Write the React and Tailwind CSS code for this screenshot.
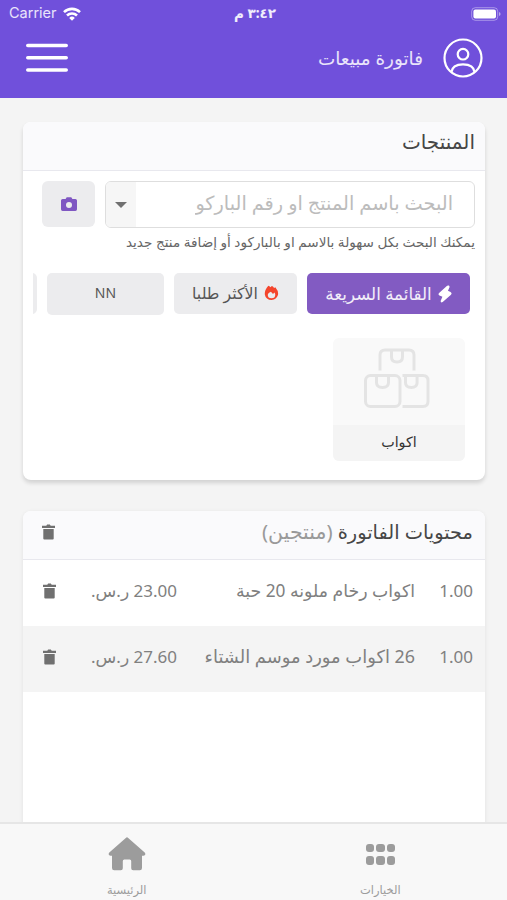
import React from 'react';

const items = [
  { qty: '1.00', name: 'اكواب رخام ملونه 20 حبة', price: '23.00 ر.س.', size: 'text-[17.3px]' },
  { qty: '1.00', name: '26 اكواب مورد موسم الشتاء', price: '27.60 ر.س.', size: 'text-[17.9px]' },
];

const WifiIcon = () => (
  <svg viewBox="0 0 18 14" className="w-[18px] h-[14px]" fill="none" stroke="#fff" strokeWidth="2.6">
    <path d="M1 5.1a11.6 11.6 0 0 1 16 0" />
    <path d="M4 8.5a7.2 7.2 0 0 1 10 0" />
    <path d="M6.2 10.9a4 4 0 0 1 5.6 0L9 13.8z" fill="#fff" stroke="none" />
  </svg>
);

const BatteryIcon = () => (
  <svg viewBox="0 0 30 14" className="w-[30px] h-[14px]">
    <rect x="0.7" y="0.7" width="26" height="12.6" rx="3.6" fill="none" stroke="#fff" strokeOpacity="0.4" strokeWidth="1" />
    <rect x="2.4" y="2.4" width="22.6" height="9.2" rx="2" fill="#fff" />
    <path d="M28 5v4q1.6-.6 1.6-2T28 5z" fill="#fff" fillOpacity="0.5" />
  </svg>
);

const UserIcon = () => (
  <svg viewBox="0 0 40 40" className="w-10 h-10" fill="none" stroke="#fff" strokeWidth="2.2">
    <circle cx="20" cy="20" r="18.5" />
    <circle cx="20" cy="16.2" r="5.3" />
    <path d="M8.4 34.2C9 29 13 26.3 20 26.3s11 2.7 11.6 7.9" />
  </svg>
);

const CameraIcon = () => (
  <svg viewBox="0 0 16 14" className="w-4 h-[14px]">
    <path
      d="M1.6 1.9h3L5.7.3h4.6l1.1 1.6h3q1.6 0 1.6 1.6v8.8q0 1.6-1.6 1.6H1.6Q0 13.9 0 12.3V3.5q0-1.6 1.6-1.6zM8 4.9a3 3 0 1 0 0 6 3 3 0 0 0 0-6z"
      fill="#7f57c2"
      fillRule="evenodd"
    />
  </svg>
);

const BoltIcon = () => (
  <svg viewBox="0 0 14 18" className="w-[14px] h-[18px]">
    <path
      d="M9.6 1.4 1.6 8.6q-.7.8.2 1.300l3.600 1.500-2 4.700q-.1 1 .8.400l8.300-7.400q.7-.8-.2-1.300L9 6.300l1.800-4.400q0-1-1.200-.5z"
      fill="#fff"
      stroke="#fff"
      strokeWidth="1.5"
      strokeLinejoin="round"
    />
  </svg>
);

const FireIcon = () => (
  <svg viewBox="0 0 16 18" className="w-[15px] h-[17px]">
    <path
      d="M4.600.8Q6 1.200 6.800 2.300 7.700 1 8.500.9q1.500.7 2.200 2.200l1.400-.9q3 3.300 3 7.400a7.200 7.200 0 0 1-14.300.2Q.8 4.800 4.600.8zM4 10.300a4 3.800 0 0 0 8 0q0-1.400-.9-2.300L9.600 9.600 7.400 7.100Q4.200 8 4 10.300z"
      fill="#f4452c"
      fillRule="evenodd"
    />
  </svg>
);

const BoxesIcon = () => (
  <svg viewBox="0 0 66 60" className="w-[66px] h-[60px]" fill="none" stroke="#e4e4e4" strokeWidth="3">
    <path d="M16 22.5V7q0-5 5-5h24q5 0 5 5v15.5" />
    <path d="M27.500 2v7q0 5 5.500 5t5.500-5V2" />
    <rect x="1.5" y="27.5" width="34.5" height="31" rx="5" />
    <path d="M12.500 27.500v7q0 5 6 5t6-5v-7" />
    <path d="M38.500 27.500h20.500q5 0 5 5v21q0 5-5 5H38.500" />
    <path d="M41.500 27.500v7q0 5 5.800 5t5.800-5v-7" />
  </svg>
);

const TrashIcon = () => (
  <svg viewBox="0 0 13 16" className="w-[13px] h-4 shrink-0" fill="#707070">
    <path d="M0 1.700h4.300L5.100.5h2.800l.8 1.200H13V4H0z" />
    <path d="M1.300 5h10.400v9.400q0 1-1 1H2.300q-1 0-1-1z" />
  </svg>
);

const HomeIcon = () => (
  <svg viewBox="0 0 38 34" className="w-[38px] h-[34px]">
    <path
      d="M17.800.9q1.200-1.100 2.400 0L36.700 15.500q1 1.200.4 2.300-.5 1-1.800 1H34V31q0 2.200-2.200 2.200h-6.600q-2 0-2-2V24q0-1.500-1.500-1.500h-5.400q-1.500 0-1.500 1.500v7.200q0 2-2 2H6.200Q4 33.200 4 31V18.800H2.700q-1.300 0-1.800-1-.6-1.100.4-2.300z"
      fill="#9c9c9c"
    />
  </svg>
);

const GridIcon = () => (
  <div className="grid grid-cols-3 gap-x-[2px] gap-y-[4px]">
    {[0, 1, 2, 3, 4, 5].map((i) => (
      <div key={i} className="w-[8.5px] h-[8.5px] rounded-[3px] bg-[#9c9c9c]" />
    ))}
  </div>
);

const MenuIcon = () => (
  <svg viewBox="0 0 42 30" className="w-[42px] h-[30px]" stroke="#fff" strokeWidth="3.6" strokeLinecap="round">
    <path d="M1.8 2.500h38.400M1.800 14.800h38.400M1.800 27h38.400" />
  </svg>
);

const App = () => {
  return (
    <div
      dir="rtl"
      className="w-full h-[900px] flex flex-col overflow-hidden bg-[#f4f4f4] font-['Noto_Sans','DejaVu_Sans',sans-serif] whitespace-nowrap"
    >
      {/* Header */}
      <header className="h-[98px] shrink-0 bg-[#7050db] text-white">
        <div dir="ltr" className="h-[27px] grid grid-cols-3 items-center pl-[9px] pr-[6px]">
          <div className="flex items-center gap-[6px]">
            <span className="text-[14.5px] leading-none font-['Inter',sans-serif] text-white/85">Carrier</span>
            <WifiIcon />
          </div>
          <div dir="rtl" className="text-center text-[13.5px] leading-none font-bold text-white/90">٣:٤٢ م</div>
          <div className="flex justify-end">
            <BatteryIcon />
          </div>
        </div>
        <div className="h-[62px] flex items-center justify-between pr-6 pl-[26px]">
          <div className="flex items-center gap-5">
            <UserIcon />
            <h1 className="text-[18.4px] leading-none text-white/85">فاتورة مبيعات</h1>
          </div>
          <MenuIcon />
        </div>
      </header>

      <main className="flex-1 min-h-0 overflow-hidden pt-6 pr-[22px] pl-[23px]">
        {/* Products */}
        <section className="h-[358px] rounded-lg bg-white shadow-[0_3px_4px_rgba(0,0,0,0.14)] overflow-hidden">
          <div className="h-[49px] pt-[10px] pr-[10px] bg-[#fafafc] border-b border-[#e8e8ee]">
            <h2 className="text-[20px] leading-5 font-medium text-[#464646]">المنتجات</h2>
          </div>
          <div className="flex gap-[10px] pt-[10px] pr-[10px]">
            <div className="w-[370px] h-[47px] flex rounded-md border-[1.5px] border-[#dedede] overflow-hidden">
              <div className="flex-1 min-w-0 flex items-center pr-[21px] pb-1">
                <div className="w-[258px] overflow-hidden text-[19.3px] leading-9 text-[#bcbcbc]">البحث باسم المنتج او رقم الباركود</div>
              </div>
              <div className="w-[30px] bg-[#f6f6f6] flex items-center justify-center">
                <div className="border-x-[6.5px] border-t-[6.5px] border-x-transparent border-t-[#707070]" />
              </div>
            </div>
            <button className="w-[53px] h-[46px] rounded-md bg-[#ececee] flex items-center justify-center">
              <CameraIcon />
            </button>
          </div>
          <p className="pt-1 pr-[10px] text-[13.6px] leading-5 text-[#666]">يمكنك البحث بكل سهولة بالاسم او بالباركود أو إضافة منتج جديد</p>

          <div className="flex gap-[10px] mt-[21px] mr-[15px] w-[437px] overflow-hidden text-[15.8px] text-[#555]">
            <button className="w-[163px] h-[41px] shrink-0 rounded-[5px] bg-[#825bc2] text-[16.7px] text-white/90 flex items-center justify-center gap-[6px]">
              <BoltIcon />
              القائمة السريعة
            </button>
            <button className="w-[123px] h-[41px] shrink-0 rounded-[5px] bg-[#ececee] flex items-center justify-center gap-[6px]">
              <FireIcon />
              الأكثر طلبا
            </button>
            <button className="w-[117px] h-[42px] shrink-0 rounded-[5px] bg-[#ececee] pb-[3px] text-[14px]">NN</button>
            <button className="w-[117px] h-[41px] shrink-0 rounded-[5px] bg-[#ececee]" />
          </div>

          <div className="w-[132px] h-[123px] mt-[23px] mr-5 rounded-md overflow-hidden bg-[#f9f9f9] flex flex-col">
            <div className="h-[87px] pt-[10px] pr-1 flex justify-center">
              <BoxesIcon />
            </div>
            <div className="flex-1 bg-[#f4f4f4] text-center text-[14.3px] leading-[34px] text-[#333]">اكواب</div>
          </div>
        </section>

        {/* Invoice contents */}
        <section className="h-[400px] mt-[31px] rounded-lg bg-white shadow-[0_1px_4px_rgba(0,0,0,0.08)] overflow-hidden">
          <div className="h-[49px] flex items-center justify-between pr-3 pl-[19px] pb-[6px] bg-[#fafafc] border-b border-[#e8e8ee]">
            <h2 className="text-[19.4px] leading-5 pb-[2px] font-medium text-[#464646]">
              محتويات الفاتورة <span className="font-normal text-[20.5px] text-[#999]">(منتجين)</span>
            </h2>
            <TrashIcon />
          </div>
          {items.map((item) => (
            <div key={item.name} className="h-[66px] flex items-center pr-3 pl-5 pb-[5px] text-[17px] text-[#808080] even:bg-white odd:bg-[#f4f4f4]">
              <span className="w-[58px]">{item.qty}</span>
              <span className={`flex-1 ${item.size}`}>{item.name}</span>
              <span className="w-[107px] ml-[14px]">{item.price}</span>
              <TrashIcon />
            </div>
          ))}
        </section>
      </main>

      {/* Bottom tabs */}
      <nav className="h-[78px] shrink-0 grid grid-cols-2 bg-[#f8f8f8] border-t-2 border-[#e6e6e6] text-[11.5px] text-[#9c9c9c]">
        <div className="flex flex-col items-center">
          <div className="h-[60px] flex items-center">
            <GridIcon />
          </div>
          <span className="leading-none">الخيارات</span>
        </div>
        <div className="flex flex-col items-center">
          <div className="h-[60px] flex items-center">
            <HomeIcon />
          </div>
          <span className="leading-none">الرئيسية</span>
        </div>
      </nav>
    </div>
  );
};

export default App;
